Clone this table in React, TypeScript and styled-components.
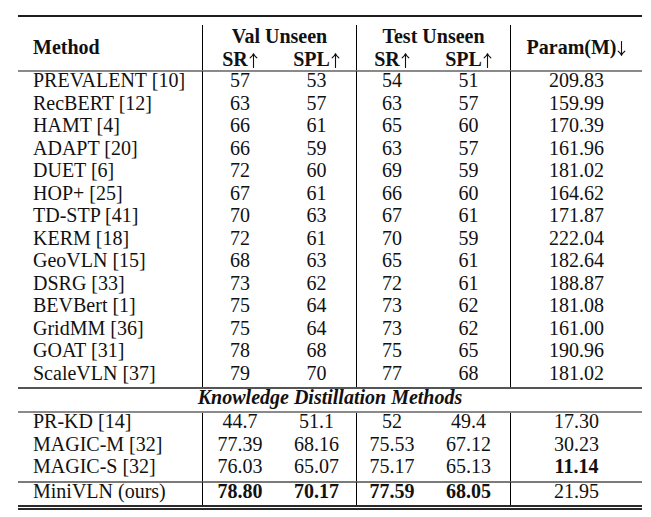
import React from 'react';
import styled, { createGlobalStyle, css } from 'styled-components';

const Global = createGlobalStyle`
  html, body { margin: 0; padding: 0; background: #ffffff; }
  body {
    font-family: "Liberation Serif", "Times New Roman", serif;
    color: #111111;
  }
`;

const Page = styled.div`
  padding: 15px 9px 0 18px;
`;

const Frame = styled.div`
  width: 624px;
  border-top: 2px solid #1e1e1e;
  border-bottom: 5px double #2a2a2a;
  padding-top: 8px;
`;

const Table = styled.table`
  width: 100%;
  border-collapse: separate;
  border-spacing: 0;
  table-layout: fixed;
  font-size: 20px;
`;

const HeadCell = styled.th<{ $left?: boolean; $divider?: boolean }>`
  font-weight: 700;
  line-height: 22.5px;
  padding: ${p => (p.$left ? '0 0 0 15px' : '0')};
  text-align: ${p => (p.$left ? 'left' : 'center')};
  vertical-align: middle;
  white-space: nowrap;
  border-right: ${p => (p.$divider ? '1px solid #000' : 'none')};
`;

const ArrowSvg = styled.svg`
  width: 9px;
  height: 15px;
  margin-left: 1px;
  vertical-align: -2px;
  overflow: visible;
`;

function Arrow({ down }: { down?: boolean }) {
  return (
    <ArrowSvg viewBox="0 0 9 15" aria-hidden="true">
      <g
        transform={down ? 'rotate(180 4.5 7.5)' : undefined}
        fill="none"
        stroke="currentColor"
        strokeWidth={1.1}
        strokeLinecap="round"
        strokeLinejoin="round"
      >
        <path d="M4.5 14.5 V1" />
        <path d="M1.2 4.8 Q3.6 3 4.5 0.8 Q5.4 3 7.8 4.8" />
      </g>
    </ArrowSvg>
  );
}

const Row = styled.tr<{ $ruleTop?: 'mid' | 'thin' }>`
  ${p =>
    p.$ruleTop &&
    css`
      & > td {
        border-top: 2px solid ${p.$ruleTop === 'mid' ? '#8a8a8a' : '#7a7a7a'};
      }
    `}
`;

const Cell = styled.td<{ $left?: boolean; $divider?: boolean; $bold?: boolean }>`
  line-height: 17px;
  padding: ${p => (p.$left ? '0 0 5.5px 15px' : '0 0 5.5px 0')};
  text-align: ${p => (p.$left ? 'left' : 'center')};
  font-weight: ${p => (p.$bold ? 700 : 400)};
  white-space: nowrap;
  border-right: ${p => (p.$divider ? '1px solid #000' : 'none')};
`;

const SectionCell = styled.td`
  line-height: 17px;
  padding: 0 0 5px 0;
  text-align: center;
  font-weight: 700;
  font-style: italic;
  border-top: 2px solid #555555;
  border-bottom: 2px solid #8a8a8a;
`;

type V = { v: string; b?: boolean };
type RowData = { name: string; vals: V[] };

const mk = (name: string, ...vals: (string | V)[]): RowData => ({
  name,
  vals: vals.map(x => (typeof x === 'string' ? { v: x } : x)),
});

const mainRows: RowData[] = [
  mk('PREVALENT [10]', '57', '53', '54', '51', '209.83'),
  mk('RecBERT [12]', '63', '57', '63', '57', '159.99'),
  mk('HAMT [4]', '66', '61', '65', '60', '170.39'),
  mk('ADAPT [20]', '66', '59', '63', '57', '161.96'),
  mk('DUET [6]', '72', '60', '69', '59', '181.02'),
  mk('HOP+ [25]', '67', '61', '66', '60', '164.62'),
  mk('TD-STP [41]', '70', '63', '67', '61', '171.87'),
  mk('KERM [18]', '72', '61', '70', '59', '222.04'),
  mk('GeoVLN [15]', '68', '63', '65', '61', '182.64'),
  mk('DSRG [33]', '73', '62', '72', '61', '188.87'),
  mk('BEVBert [1]', '75', '64', '73', '62', '181.08'),
  mk('GridMM [36]', '75', '64', '73', '62', '161.00'),
  mk('GOAT [31]', '78', '68', '75', '65', '190.96'),
  mk('ScaleVLN [37]', '79', '70', '77', '68', '181.02'),
];

const kdRows: RowData[] = [
  mk('PR-KD [14]', '44.7', '51.1', '52', '49.4', '17.30'),
  mk('MAGIC-M [32]', '77.39', '68.16', '75.53', '67.12', '30.23'),
  mk('MAGIC-S [32]', '76.03', '65.07', '75.17', '65.13', { v: '11.14', b: true }),
];

const ours: RowData = mk(
  'MiniVLN (ours)',
  { v: '78.80', b: true },
  { v: '70.17', b: true },
  { v: '77.59', b: true },
  { v: '68.05', b: true },
  '21.95'
);

const dividerAfter = [false, true, false, true, false];

function DataRow({ row, ruleTop }: { row: RowData; ruleTop?: 'mid' | 'thin' }) {
  return (
    <Row $ruleTop={ruleTop}>
      <Cell $left $divider>
        {row.name}
      </Cell>
      {row.vals.map((c, i) => (
        <Cell key={i} $divider={dividerAfter[i]} $bold={c.b}>
          {c.v}
        </Cell>
      ))}
    </Row>
  );
}

export default function App() {
  return (
    <>
      <Global />
      <Page>
        <Frame>
          <Table>
            <colgroup>
              <col style={{ width: 185 }} />
              <col style={{ width: 74 }} />
              <col style={{ width: 80 }} />
              <col style={{ width: 70 }} />
              <col style={{ width: 84 }} />
              <col style={{ width: 131 }} />
            </colgroup>
            <thead>
              <tr>
                <HeadCell rowSpan={2} $left $divider>
                  Method
                </HeadCell>
                <HeadCell colSpan={2} $divider>
                  Val Unseen
                </HeadCell>
                <HeadCell colSpan={2} $divider>
                  Test Unseen
                </HeadCell>
                <HeadCell rowSpan={2}>
                  Param(M)
                  <Arrow down />
                </HeadCell>
              </tr>
              <tr>
                <HeadCell>
                  SR
                  <Arrow />
                </HeadCell>
                <HeadCell $divider>
                  SPL
                  <Arrow />
                </HeadCell>
                <HeadCell>
                  SR
                  <Arrow />
                </HeadCell>
                <HeadCell $divider>
                  SPL
                  <Arrow />
                </HeadCell>
              </tr>
            </thead>
            <tbody>
              {mainRows.map((r, i) => (
                <DataRow key={r.name} row={r} ruleTop={i === 0 ? 'mid' : undefined} />
              ))}
              <tr>
                <SectionCell colSpan={6}>Knowledge Distillation Methods</SectionCell>
              </tr>
              {kdRows.map(r => (
                <DataRow key={r.name} row={r} />
              ))}
              <DataRow row={ours} ruleTop="thin" />
            </tbody>
          </Table>
        </Frame>
      </Page>
    </>
  );
}
